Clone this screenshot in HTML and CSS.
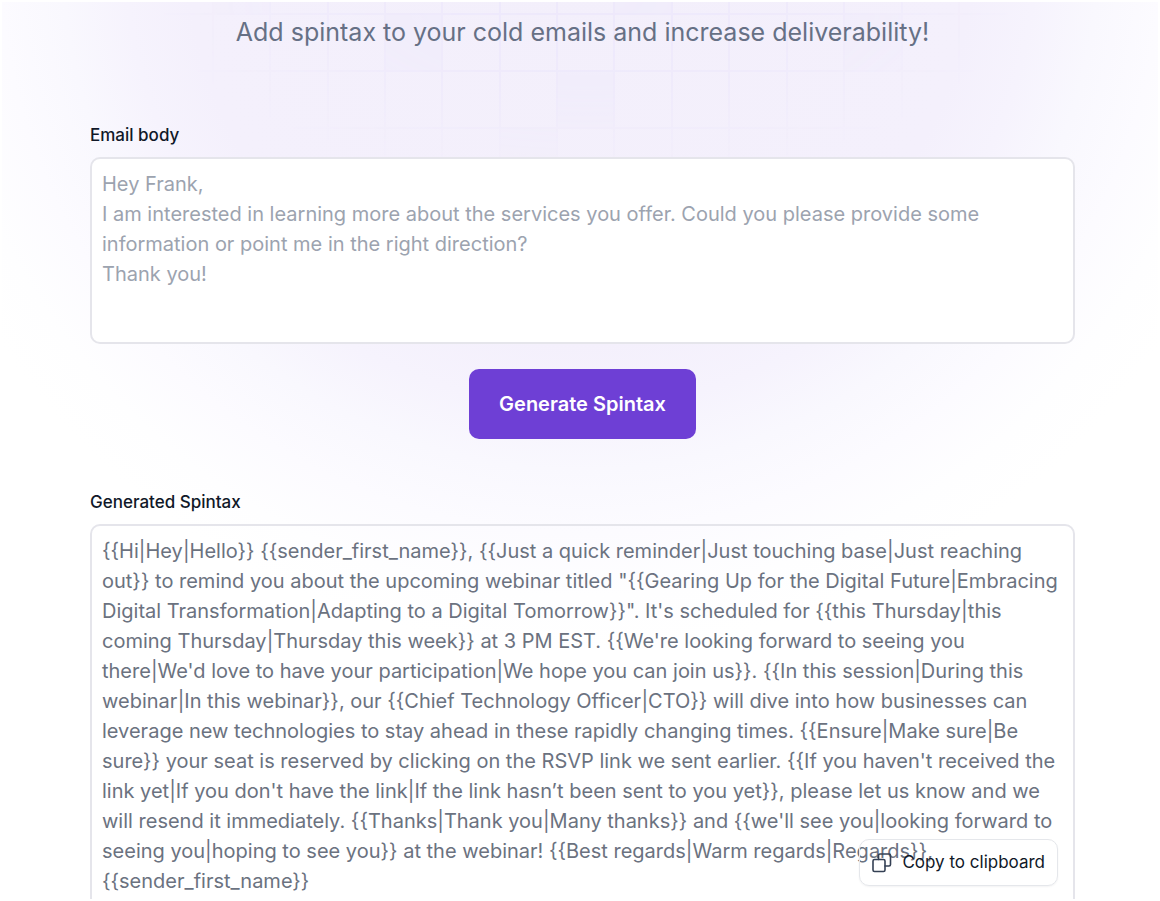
FILE: index.html
```html
<!DOCTYPE html>
<html lang="en">
<head>
    <meta charset="UTF-8">
    <meta name="viewport" content="width=device-width, initial-scale=1.0">
    <title>Spintax Generator</title>
    <link rel="stylesheet" href="styles.css">
</head>
<body>
    <div class="page">
        <!-- Faded grid behind the heading -->
        <svg class="grid" viewBox="0 0 1160 200" width="1160" height="200" aria-hidden="true">
            <defs>
                <radialGradient id="fade" gradientUnits="userSpaceOnUse" cx="586" cy="0" r="430" gradientTransform="scale(1 .42)">
                    <stop offset="0" stop-color="#fff"/>
                    <stop offset=".5" stop-color="#fff" stop-opacity=".7"/>
                    <stop offset="1" stop-color="#fff" stop-opacity="0"/>
                </radialGradient>
                <mask id="gridMask"><rect width="1160" height="200" fill="url(#fade)"/></mask>
            </defs>
            <g mask="url(#gridMask)">
                <path class="grid-cell" d="M385 14h57v57h-57zM557 71h57v57h-57zM614 0h58v14h-58zM844 14h58v57h-58zM500 128h57v57h-57zM213 0h57v14h-57z"/>
                <path class="grid-line" d="M155 0v200M213 0v200M270 0v200M328 0v200M385 0v200M442 0v200M500 0v200M557 0v200M614 0v200M672 0v200M729 0v200M787 0v200M844 0v200M902 0v200M959 0v200M1016 0v200M0 14h1160M0 71h1160M0 128h1160M0 185h1160"/>
            </g>
        </svg>

        <main class="container">
            <p class="subtitle">Add spintax to your cold emails and increase deliverability!</p>

            <form class="generator">
                <label class="field-label" for="emailBody">Email body</label>
                <textarea class="field field-input" id="emailBody" placeholder="Hey Frank,
I am interested in learning more about the services you offer. Could you please provide some information or point me in the right direction?
Thank you!"></textarea>

                <button class="btn-generate" type="button">Generate Spintax</button>

                <label class="field-label" for="spintax">Generated Spintax</label>
                <div class="output">
                    <textarea class="field field-output" id="spintax" readonly>{{Hi|Hey|Hello}} {{sender_first_name}}, {{Just a quick reminder|Just touching base|Just reaching out}} to remind you about the upcoming webinar titled "{{Gearing Up for the Digital Future|Embracing Digital Transformation|Adapting to a Digital Tomorrow}}". It's scheduled for {{this Thursday|this coming Thursday|Thursday this week}} at 3 PM EST. {{We're looking forward to seeing you there|We'd love to have your participation|We hope you can join us}}. {{In this session|During this webinar|In this webinar}}, our {{Chief Technology Officer|CTO}} will dive into how businesses can leverage new technologies to stay ahead in these rapidly changing times. {{Ensure|Make sure|Be sure}} your seat is reserved by clicking on the RSVP link we sent earlier. {{If you haven't received the link yet|If you don't have the link|If the link hasn’t been sent to you yet}}, please let us know and we will resend it immediately. {{Thanks|Thank you|Many thanks}} and {{we'll see you|looking forward to seeing you|hoping to see you}} at the webinar! {{Best regards|Warm regards|Regards}}, {{sender_first_name}}</textarea>
                    <button class="btn-copy" type="button">
                        <svg width="20" height="20" viewBox="0 0 20 20" fill="none" stroke="#344054" stroke-width="1.6" stroke-linejoin="round" stroke-linecap="round" aria-hidden="true">
                            <rect x="1" y="6.5" width="12" height="12" rx="1.5"/>
                            <path d="M6.5 6.500V2.500a1.500 1.500 0 0 1 1.500-1.500h9A1.500 1.500 0 0 1 18.500 2.500v9a1.500 1.500 0 0 1-1.500 1.500h-4"/>
                        </svg>
                        Copy to clipboard
                    </button>
                </div>
            </form>
        </main>
    </div>
</body>
</html>
```
FILE: styles.css
```css
* {
    box-sizing: border-box;
}
body {
    margin: 0;
    height: 100vh;
    overflow: hidden;
    border: 2px solid #fff;
    background: #fff;
    font-family: Inter, sans-serif;
    color: #101828;
}
.page {
    position: relative;
    background: radial-gradient(circle 700px at 50% -50px, #f3effb 0%, #f4f0fc 56%, #f6f3fd 65%, #f9f8fe 74%, #fcfbff 83%, #fefeff 92%, #fff 100%);
}
.grid {
    position: absolute;
    top: -2px;
    left: -2px;
}
.grid-line {
    fill: none;
    stroke: #ede8fb;
    stroke-width: 2;
}
.grid-cell {
    fill: #f0ecfb;
}
.container {
    position: relative;
    padding: 12px 83px 40px 88px;
}
.subtitle {
    margin: 0 0 73px;
    font-size: 25px;
    line-height: 36px;
    text-align: center;
    color: #667085;
}
.generator {
    display: flex;
    flex-direction: column;
}
.field-label {
    margin-bottom: 10px;
    font-size: 17px;
    font-weight: 500;
    line-height: 24px;
}
.field {
    display: block;
    width: 100%;
    margin: 0;
    padding: 10px;
    border: 2px solid #e5e5eb;
    border-radius: 10px;
    background: #fff;
    font-family: inherit;
    font-size: 20px;
    line-height: 30px;
    color: #6b7280;
    resize: none;
    overflow: hidden;
}
.field::placeholder {
    color: #9ca3af;
}
.field-input {
    height: 187px;
}
.field-output {
    height: 384px;
    background: transparent;
}
.btn-generate {
    align-self: center;
    margin: 25px 0 51px;
    padding: 20px 30px;
    border: none;
    border-radius: 10px;
    background: #6e3fd5;
    font-family: inherit;
    font-size: 20px;
    font-weight: 600;
    line-height: 30px;
    color: #fff;
    cursor: pointer;
}
.output {
    position: relative;
}
/* Sits over the lower right corner of the output */
.btn-copy {
    position: absolute;
    right: 17px;
    bottom: 22px;
    display: flex;
    align-items: center;
    gap: 10px;
    padding: 10px 12px;
    border: 1px solid #e5e7eb;
    border-radius: 10px;
    background: transparent;
    box-shadow: 0 1px 2px rgba(16, 24, 40, 0.05);
    font-family: inherit;
    font-size: 17px;
    line-height: 25px;
    color: #101828;
    cursor: pointer;
}
```
